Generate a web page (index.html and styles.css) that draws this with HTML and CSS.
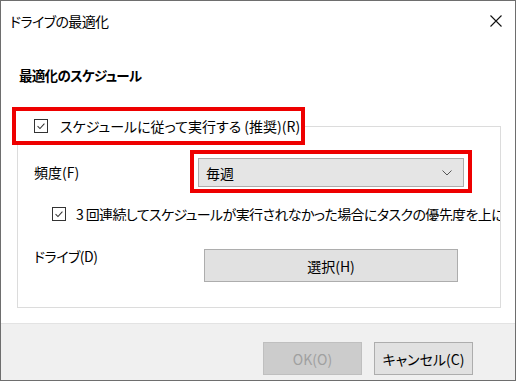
FILE: index.html
```html
<!DOCTYPE html>
<html lang="ja">
<head>
  <meta charset="UTF-8" />
  <title>ドライブの最適化</title>
  <link rel="stylesheet" href="styles.css">
</head>
<body>
  <div class="dialog">
    <div class="titlebar">
      <span class="title">ドライブの最適化</span>
      <svg class="close" width="12" height="12" viewBox="0 0 12 12">
        <path d="M0.5 0.5 L11.5 11.5 M11.5 0.5 L0.5 11.5" stroke="#111" stroke-width="1.1" fill="none"/>
      </svg>
    </div>

    <div class="content">
      <h2 class="heading">最適化のスケジュール</h2>
      <div class="group">
        <label class="legend">
          <span class="check">
            <svg width="14" height="14" viewBox="0 0 14 14"><path d="M3 7.2 L5.8 10 L11 4.2" stroke="#333" stroke-width="1.2" fill="none"/></svg>
          </span>
          スケジュールに従って実行する (推奨)(R)
        </label>

        <div class="row freq">
          <span class="label">頻度(F)</span>
          <div class="mark">
            <div class="select">
              <span>毎週</span>
              <svg width="10" height="6" viewBox="0 0 10 6"><path d="M0.5 0.5 L5 5 L9.5 0.5" stroke="#555" stroke-width="1" fill="none"/></svg>
            </div>
          </div>
        </div>

        <div class="row retry">
          <span class="check">
            <svg width="14" height="14" viewBox="0 0 14 14"><path d="M3 7.2 L5.8 10 L11 4.2" stroke="#333" stroke-width="1.2" fill="none"/></svg>
          </span>
          <span class="retry-text">3 回連続してスケジュールが実行されなかった場合にタスクの優先度を上に</span>
        </div>

        <div class="row drive">
          <span class="label">ドライブ(D)</span>
          <button class="btn wide">選択(H)</button>
        </div>
      </div>
    </div>

    <div class="footer">
      <button class="btn disabled">OK(O)</button>
      <button class="btn">キャンセル(C)</button>
    </div>
  </div>
</body>
</html>
```

FILE: styles.css
```css
* { margin: 0; padding: 0; box-sizing: border-box; }
body {
  background: #fff;
  font-family: "Noto Sans CJK JP", sans-serif;
  font-size: 14px;
  font-feature-settings: "palt";
  color: #000;
}
.dialog {
  width: 516px; height: 381px;
  border: 1px solid #6e6e6e;
  background: #fff;
  display: flex; flex-direction: column;
}
.titlebar {
  height: 39px;
  display: flex; align-items: center; justify-content: space-between;
  padding-left: 9px;
  padding-right: 13px;
}
.title { font-size: 14px; letter-spacing: -0.6px; }
.content { flex: 1; padding-left: 16px; }
.heading {
  font-size: 13.5px;
  font-weight: bold;
  line-height: 20px;
  letter-spacing: -0.7px;
  margin-top: 25px;
  margin-left: 2px;
}
.group {
  position: relative;
  width: 484px; height: 182px;
  margin-top: 41px;
  border: 1px solid #dcdcdc;
  padding-top: 23px;
}
.legend {
  position: absolute;
  left: -6px; top: -20px;
  width: 293px; height: 38px;
  border: 4px solid #ee0000;
  background: #fff;
  display: flex; align-items: center;
  padding-left: 18px;
  gap: 12px;
  white-space: nowrap;
}
.check {
  width: 14px; height: 14px;
  border: 1px solid #333;
  background: #fff;
  display: flex; align-items: center; justify-content: center;
  flex: none;
}
.check svg { display: block; }
.row { display: flex; padding-left: 16px; }
.freq { align-items: center; }
.label { width: 156px; flex: none; line-height: 20px; }
.mark {
  border: 4px solid #ee0000;
  padding: 4px 4px 2px 4px;
}
.select {
  width: 266px; height: 29px;
  background: #e5e5e5;
  border: 1px solid #acacac;
  display: flex; align-items: center; justify-content: space-between;
  padding: 0 11px 0 7px;
}
.retry {
  margin-top: 14px;
  padding-left: 34px;
  align-items: center;
  gap: 10px;
  overflow: hidden;
  white-space: nowrap;
}
.retry-text { line-height: 14px; letter-spacing: -0.6px; }
.drive { margin-top: 28px; align-items: flex-start; }
.drive .label { width: 170px; margin-top: -3px; letter-spacing: -0.5px; }
.btn {
  font-family: inherit;
  font-size: 14px;
  font-feature-settings: "palt";
  height: 33px;
  background: #e1e1e1;
  border: 1px solid #adadad;
  color: #000;
}
.wide { width: 254px; }
.footer {
  height: 57px;
  background: #f0f0f0;
  border-top: 1px solid #e3e3e3;
  display: flex; justify-content: flex-end;
  gap: 12px;
  padding-top: 18px;
  padding-right: 42px;
}
.footer .btn { width: 99px; }
.disabled {
  background: #cccccc;
  border-color: #bfbfbf;
  color: #a0a0a0;
}
```
